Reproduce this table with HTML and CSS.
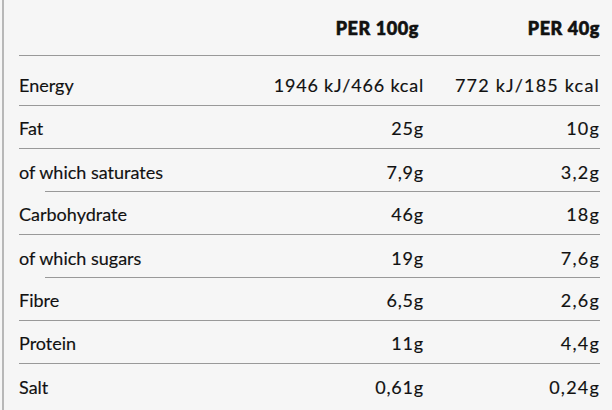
FILE: index.html
```html
<!DOCTYPE html>
<html>
<head>
<meta charset="utf-8">
<link rel="stylesheet" href="styles.css">
</head>
<body>
<div class="panel">
  <div class="row head">
    <div class="label"></div>
    <div class="val v1">PER 100g</div>
    <div class="val v2">PER 40g</div>
  </div>
  <div class="row energy">
    <div class="label">Energy</div>
    <div class="val">1946 kJ/466 kcal</div>
    <div class="val">772 kJ/185 kcal</div>
  </div>
  <div class="row">
    <div class="label">Fat</div>
    <div class="val">25g</div>
    <div class="val">10g</div>
  </div>
  <div class="row sub">
    <div class="label">of which saturates</div>
    <div class="val">7,9g</div>
    <div class="val">3,2g</div>
  </div>
  <div class="row">
    <div class="label">Carbohydrate</div>
    <div class="val">46g</div>
    <div class="val">18g</div>
  </div>
  <div class="row sub">
    <div class="label">of which sugars</div>
    <div class="val">19g</div>
    <div class="val">7,6g</div>
  </div>
  <div class="row">
    <div class="label">Fibre</div>
    <div class="val">6,5g</div>
    <div class="val">2,6g</div>
  </div>
  <div class="row">
    <div class="label">Protein</div>
    <div class="val">11g</div>
    <div class="val">4,4g</div>
  </div>
  <div class="row last">
    <div class="label">Salt</div>
    <div class="val">0,61g</div>
    <div class="val">0,24g</div>
  </div>
</div>
</body>
</html>
```
FILE: styles.css
```css
html, body {
  margin: 0;
  padding: 0;
  background: #f6f6f6;
}
body {
  font-family: "Lato", "Liberation Sans", sans-serif;
  font-size: 18px;
  color: #111;
  -webkit-text-stroke: 0.15px #111;
}
.panel {
  margin-left: 2px;
  border-left: 2px solid #b8b8b8;
  padding: 0 12px 0 15px;
  height: 410px;
  box-sizing: border-box;
}
.row {
  display: grid;
  grid-template-columns: 1fr 160px 176px;
  align-items: end;
  height: 43px;
  box-sizing: border-box;
  padding-bottom: 11px;
  line-height: 18px;
  position: relative;
  border-bottom: 1px solid #999;
}
.row.head {
  height: 56px;
  padding-bottom: 18px;
  font-weight: 900;
  -webkit-text-stroke: 0.6px #111;
}
.row.head .val {
  letter-spacing: 0.6px;
}
.row.head .v1 {
  padding-right: 5px;
}
.row.energy {
  height: 50px;
}
.row.sub {
  border-bottom: none;
}
.row.sub::after {
  content: "";
  position: absolute;
  left: 26px;
  right: 0;
  bottom: 0;
  border-bottom: 1px solid #999;
}
.row.last {
  border-bottom: none;
}
.val {
  text-align: right;
  white-space: nowrap;
  letter-spacing: 0.8px;
}
.row:not(.head) .val:last-child {
  letter-spacing: 1.2px;
}
```
